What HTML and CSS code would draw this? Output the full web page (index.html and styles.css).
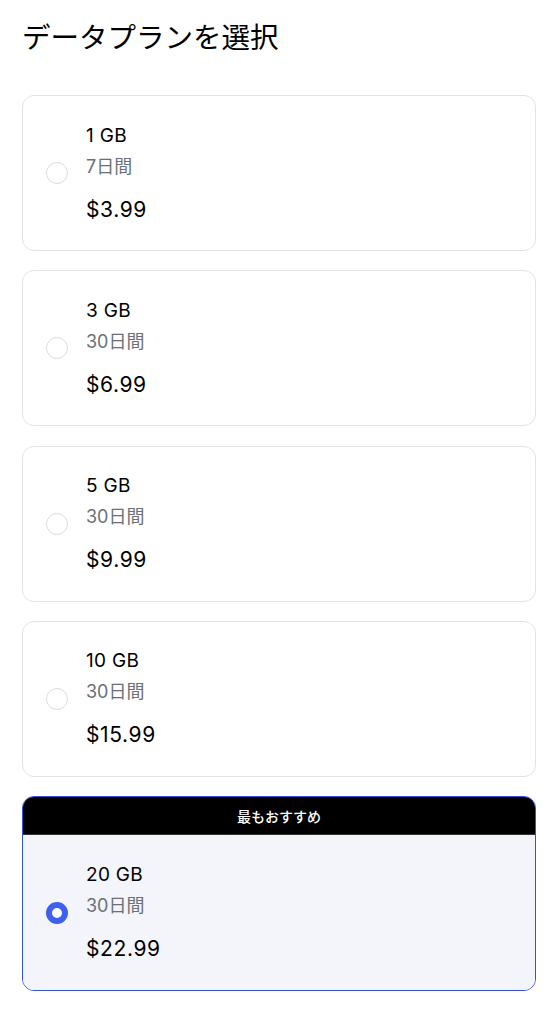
FILE: index.html
```html
<!DOCTYPE html>
<html lang="ja">
<head>
<meta charset="utf-8">
<link rel="stylesheet" href="styles.css">
</head>
<body>
<h1 class="title">データプランを選択</h1>
<div class="plans">
  <label class="plan">
    <span class="radio"></span>
    <span class="info">
      <span class="size">1 GB</span>
      <span class="days">7日間</span>
      <span class="price">$3.99</span>
    </span>
  </label>
  <label class="plan">
    <span class="radio"></span>
    <span class="info">
      <span class="size">3 GB</span>
      <span class="days">30日間</span>
      <span class="price">$6.99</span>
    </span>
  </label>
  <label class="plan">
    <span class="radio"></span>
    <span class="info">
      <span class="size">5 GB</span>
      <span class="days">30日間</span>
      <span class="price">$9.99</span>
    </span>
  </label>
  <label class="plan">
    <span class="radio"></span>
    <span class="info">
      <span class="size">10 GB</span>
      <span class="days">30日間</span>
      <span class="price">$15.99</span>
    </span>
  </label>
  <div class="plan-wrap selected">
    <div class="badge">最もおすすめ</div>
    <label class="plan">
      <span class="radio"></span>
      <span class="info">
        <span class="size">20 GB</span>
        <span class="days">30日間</span>
        <span class="price">$22.99</span>
      </span>
    </label>
  </div>
</div>
</body>
</html>
```
FILE: styles.css
```css
* { box-sizing: border-box; }
body {
  margin: 0;
  padding: 0 24px 0 22px;
  background: #fff;
  font-family: Inter, "Noto Sans CJK JP", sans-serif;
  color: #000;
}
.title {
  margin: 20px 0 39px;
  font-size: 28.5px;
  line-height: 36px;
  font-weight: 400;
}
.plans {
  display: flex;
  flex-direction: column;
  gap: 19.25px;
}
.plan {
  display: flex;
  align-items: center;
  gap: 18px;
  height: 156px;
  padding: 0 23px;
  border: 1px solid #e3e3e3;
  border-radius: 12px;
  background: #fff;
}
.radio {
  width: 22px;
  height: 22px;
  border-radius: 50%;
  border: 1px solid #dcdcdc;
  flex: none;
}
.info {
  display: flex;
  flex-direction: column;
}
.size {
  font-size: 19px;
  line-height: 28px;
  letter-spacing: 0.3px;
}
.days {
  margin-top: 4px;
  font-size: 18px;
  line-height: 26px;
  color: #6b7078;
}
.price {
  margin-top: 15px;
  font-size: 21px;
  line-height: 30px;
  letter-spacing: 0.6px;
}
.plan-wrap {
  border: 1px solid #3550d8;
  border-radius: 12px;
  overflow: hidden;
}
.badge {
  height: 38px;
  background: #000;
  color: #fff;
  font-size: 14px;
  font-weight: 500;
  display: flex;
  align-items: center;
  justify-content: center;
  border-bottom: 1px solid #333;
}
.selected .plan {
  border: none;
  border-radius: 0;
  background: #f3f5fa;
  height: 155px;
}
.selected .radio {
  border: 6px solid #3e5ff0;
  background: #fff;
}
```
